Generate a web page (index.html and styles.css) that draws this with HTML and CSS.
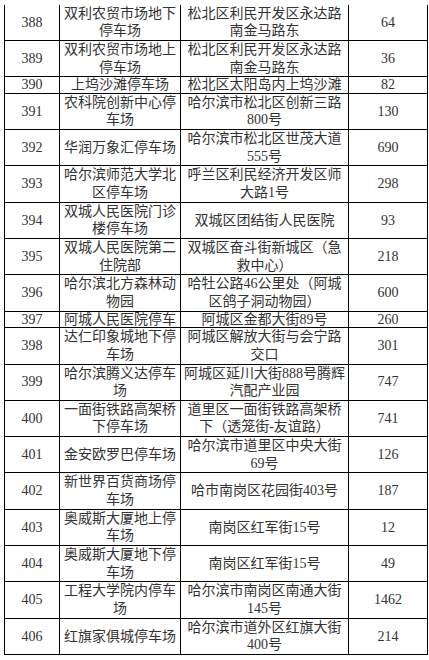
FILE: index.html
```html
<!DOCTYPE html>
<html lang="zh-CN">
<head>
<meta charset="utf-8">
<link rel="stylesheet" href="styles.css">
</head>
<body>
<div class="page">
<table class="list">
<colgroup><col class="c-no"><col class="c-name"><col class="c-addr"><col class="c-num"></colgroup>
<tbody>
<tr><td>388</td><td>双利农贸市场地下<br>停车场</td><td>松北区利民开发区永达路<br>南金马路东</td><td>64</td></tr>
<tr><td>389</td><td>双利农贸市场地上<br>停车场</td><td>松北区利民开发区永达路<br>南金马路东</td><td>36</td></tr>
<tr class="single"><td>390</td><td>上坞沙滩停车场</td><td>松北区太阳岛内上坞沙滩</td><td>82</td></tr>
<tr><td>391</td><td>农科院创新中心停<br>车场</td><td>哈尔滨市松北区创新三路<br>800号</td><td>130</td></tr>
<tr><td>392</td><td>华润万象汇停车场</td><td>哈尔滨市松北区世茂大道<br>555号</td><td>690</td></tr>
<tr><td>393</td><td>哈尔滨师范大学北<br>区停车场</td><td>呼兰区利民经济开发区师<br>大路1号</td><td>298</td></tr>
<tr><td>394</td><td>双城人民医院门诊<br>楼停车场</td><td>双城区团结街人民医院</td><td>93</td></tr>
<tr><td>395</td><td>双城人民医院第二<br>住院部</td><td>双城区奋斗街新城区（急<br>救中心）</td><td>218</td></tr>
<tr><td>396</td><td>哈尔滨北方森林动<br>物园</td><td>哈牡公路46公里处（阿城<br>区鸽子洞动物园）</td><td>600</td></tr>
<tr class="single"><td>397</td><td>阿城人民医院停车</td><td>阿城区金都大街89号</td><td>260</td></tr>
<tr><td>398</td><td>达仁印象城地下停<br>车场</td><td>阿城区解放大街与会宁路<br>交口</td><td>301</td></tr>
<tr><td>399</td><td>哈尔滨腾义达停车<br>场</td><td>阿城区延川大街888号腾辉<br>汽配产业园</td><td>747</td></tr>
<tr><td>400</td><td>一面街铁路高架桥<br>下停车场</td><td>道里区一面街铁路高架桥<br>下（透笼街-友谊路）</td><td>741</td></tr>
<tr><td>401</td><td>金安欧罗巴停车场</td><td>哈尔滨市道里区中央大街<br>69号</td><td>126</td></tr>
<tr><td>402</td><td>新世界百货商场停<br>车场</td><td>哈市南岗区花园街403号</td><td>187</td></tr>
<tr><td>403</td><td>奥威斯大厦地上停<br>车场</td><td>南岗区红军街15号</td><td>12</td></tr>
<tr><td>404</td><td>奥威斯大厦地下停<br>车场</td><td>南岗区红军街15号</td><td>49</td></tr>
<tr><td>405</td><td>工程大学院内停车<br>场</td><td>哈尔滨市南岗区南通大街<br>145号</td><td>1462</td></tr>
<tr><td>406</td><td>红旗家俱城停车场</td><td>哈尔滨市道外区红旗大街<br>400号</td><td>214</td></tr>
</tbody>
</table>
</div>
</body>
</html>
```

FILE: styles.css
```css
html, body {
  margin: 0;
  padding: 0;
  background: #ffffff;
}

.page {
  padding: 4.7px 0 0 4px;
}

.list {
  border-collapse: collapse;
  table-layout: fixed;
  width: 423px;
  border: 1px solid #000;
  border-top-style: hidden;
  font-family: "Liberation Serif", "Noto Sans CJK SC", serif;
  font-size: 14px;
  color: #333;
}

.c-no { width: 55px; }
.c-name { width: 121px; }
.c-addr { width: 168px; }
.c-num { width: 79px; }

.list td {
  border: 1px solid #000;
  padding: 0;
  height: 35.3px;
  line-height: 17.65px;
  text-align: center;
  vertical-align: middle;
  white-space: nowrap;
  overflow: hidden;
}

.list tr.single td {
  height: 15.5px;
  line-height: 15.5px;
}
```
